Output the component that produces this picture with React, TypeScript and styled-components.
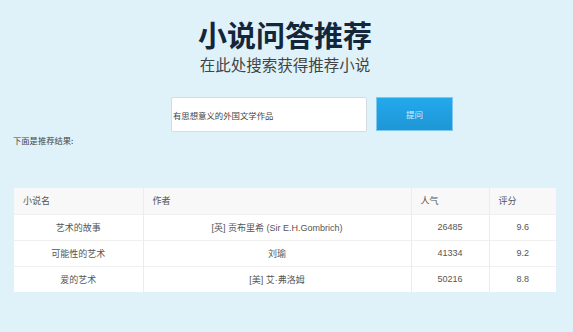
import React from "react";
import styled, { createGlobalStyle } from "styled-components";

const GlobalStyle = createGlobalStyle`
  html, body { margin: 0; padding: 0; }
  body {
    background: #dff2fa;
    font-family: "Liberation Sans", "Noto Sans CJK SC", sans-serif;
    width: 573px;
    height: 332px;
    overflow: hidden;
  }
`;

const Page = styled.div`
  display: flex;
  flex-direction: column;
  padding: 16px 0 0 0;
`;

const Hero = styled.header`
  display: flex;
  flex-direction: column;
  align-items: center;
  padding-right: 3px;
`;

const Title = styled.h1`
  margin: 0;
  font-family: "Noto Sans CJK SC", sans-serif;
  font-weight: 700;
  font-size: 29px;
  line-height: 36px;
  color: #13263a;
`;

const Subtitle = styled.h2`
  margin: 1px 0 0 0;
  font-family: "Noto Sans CJK SC", sans-serif;
  font-weight: 400;
  font-size: 15.5px;
  line-height: 22px;
  color: #444;
`;

const SearchRow = styled.div`
  display: flex;
  align-items: flex-start;
  gap: 9px;
  margin-top: 22px;
  padding-left: 171px;
`;

const Input = styled.input`
  box-sizing: border-box;
  width: 196px;
  height: 35px;
  border: 1px solid #d4dde2;
  border-radius: 2px;
  background: #fff;
  padding: 0 1px;
  font-family: "Noto Sans CJK SC", sans-serif;
  font-size: 8.4px;
  color: #444;
  outline: none;
`;

const AskButton = styled.button`
  box-sizing: border-box;
  width: 77px;
  height: 34px;
  border: 1px solid #7cc8ee;
  background: linear-gradient(#22a9ec, #1f96d6);
  color: #d9eefa;
  font-family: "Noto Sans CJK SC", sans-serif;
  font-size: 8.5px;
  cursor: pointer;
`;

const ResultLabel = styled.div`
  margin: 2px 0 0 13px;
  font-family: "Noto Sans CJK SC", sans-serif;
  font-size: 8.3px;
  line-height: 12px;
  color: #444;
`;

const Table = styled.table`
  margin: 42px 0 0 14px;
  width: 542px;
  border-collapse: collapse;
  background: #fff;
  font-family: "Liberation Sans", "Noto Sans CJK SC", sans-serif;
  font-size: 9px;
  table-layout: fixed;
`;

const HeadCell = styled.th<{ $w: number }>`
  box-sizing: border-box;
  width: ${(p) => p.$w}px;
  height: 26px;
  padding: 0 0 0 9px;
  text-align: left;
  font-weight: 400;
  color: #555;
  background: #f8f8f8;
  border-left: 1px solid #ececec;
  &:first-child { border-left: none; }
`;

const Cell = styled.td`
  box-sizing: border-box;
  height: 26px;
  padding: 0;
  text-align: center;
  color: #555;
  border-top: 1px solid #f0f0f0;
  border-left: 1px solid #ececec;
  &:first-child { border-left: none; }
`;

const rows = [
  { name: "艺术的故事", author: "[英] 贡布里希 (Sir E.H.Gombrich)", pop: "26485", score: "9.6" },
  { name: "可能性的艺术", author: "刘瑜", pop: "41334", score: "9.2" },
  { name: "爱的艺术", author: "[美] 艾·弗洛姆", pop: "50216", score: "8.8" },
];

export default function App() {
  return (
    <>
      <GlobalStyle />
      <Page>
        <Hero>
          <Title>小说问答推荐</Title>
          <Subtitle>在此处搜索获得推荐小说</Subtitle>
        </Hero>
        <SearchRow>
          <Input defaultValue="有思想意义的外国文学作品" />
          <AskButton>提问</AskButton>
        </SearchRow>
        <ResultLabel>下面是推荐结果:</ResultLabel>
        <Table>
          <thead>
            <tr>
              <HeadCell $w={129}>小说名</HeadCell>
              <HeadCell $w={268}>作者</HeadCell>
              <HeadCell $w={78}>人气</HeadCell>
              <HeadCell $w={67}>评分</HeadCell>
            </tr>
          </thead>
          <tbody>
            {rows.map((r) => (
              <tr key={r.name}>
                <Cell>{r.name}</Cell>
                <Cell>{r.author}</Cell>
                <Cell>{r.pop}</Cell>
                <Cell>{r.score}</Cell>
              </tr>
            ))}
          </tbody>
        </Table>
      </Page>
    </>
  );
}
